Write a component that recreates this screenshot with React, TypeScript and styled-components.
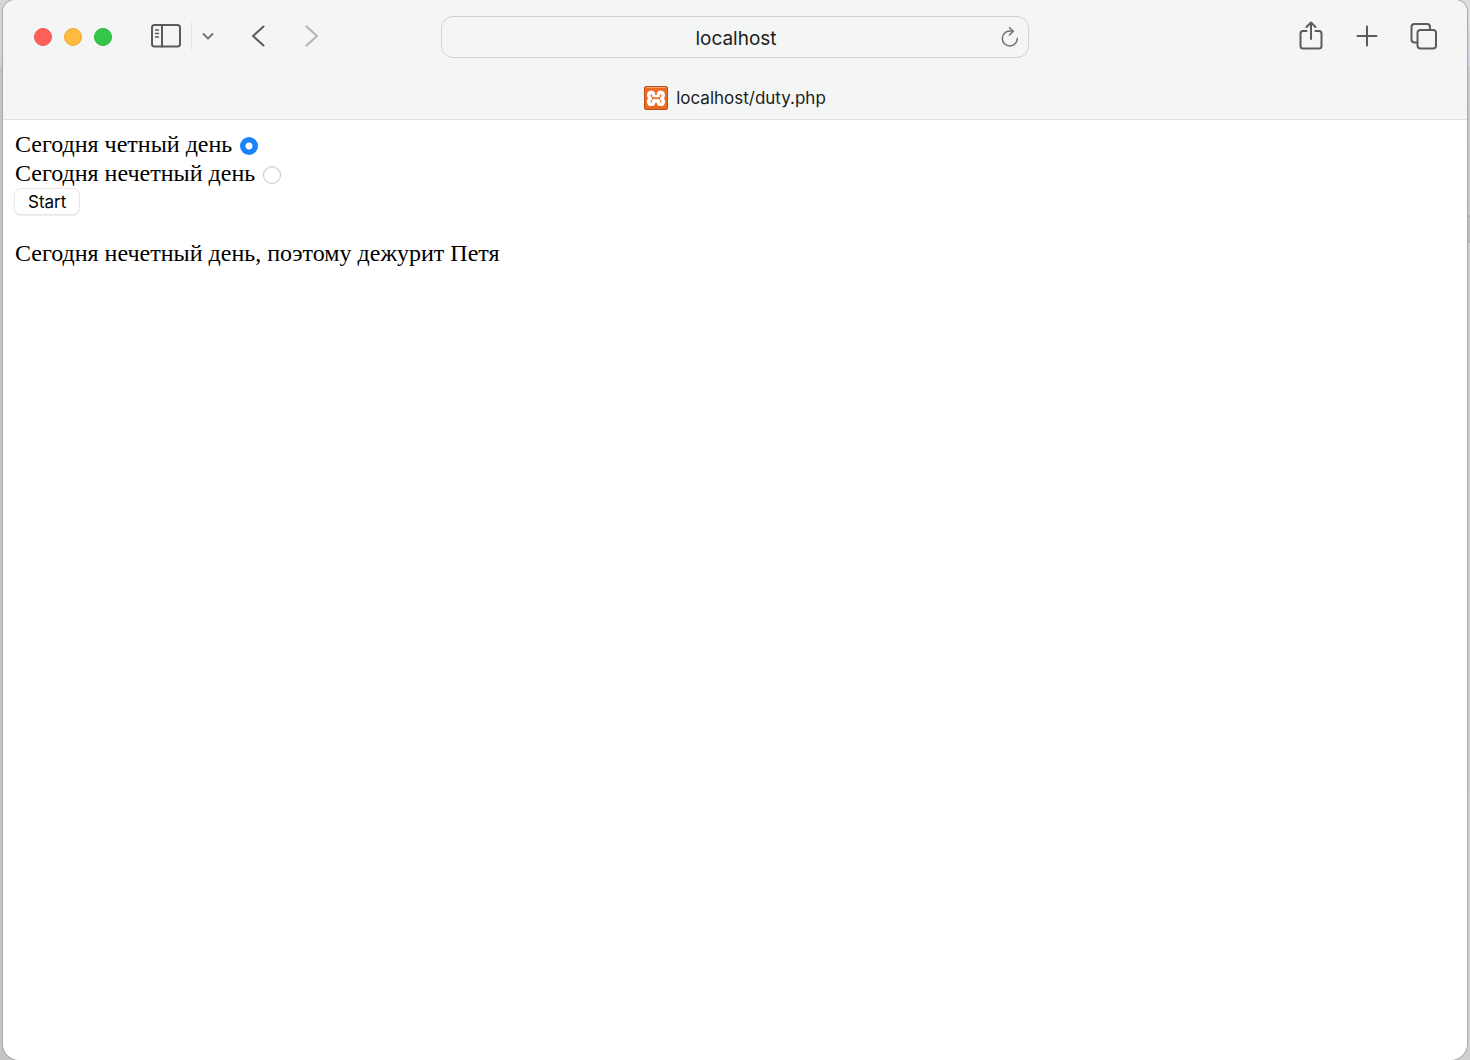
import React, { useState } from "react";
import styled, { createGlobalStyle } from "styled-components";

const GlobalStyle = createGlobalStyle`
  *, *::before, *::after { box-sizing: border-box; }
  body { margin: 0; }
`;

const sans = `Inter, "Liberation Sans", sans-serif`;
const serif = `"Liberation Serif", "Times New Roman", serif`;

const Desktop = styled.div`
  display: flex;
  min-height: 100vh;
  padding: 0 3px;
  background:
    linear-gradient(#d6d6d6 0, #cfd0da 66px, #c4c4c4 67px, #c4c4c4 100%) left / 50% 100% no-repeat,
    linear-gradient(#dedede 0, #d3d4de 66px, #cbcbcb 67px, #c6c6c6 215px, #a4a4a4 216px, #bdbdbd 218px, #bdbdbd 241px, #a8a8a8 242px, #cdcdcd 243px, #d0d0d0 100%);
`;

const Window = styled.div`
  flex: 1;
  display: flex;
  flex-direction: column;
  overflow: hidden;
  border-radius: 12px 12px 16px 16px;
  background: #fff;
  box-shadow: 0 0 0 1px #a9aaab;
`;

const Chrome = styled.header`
  background: #f4f6f5;
  border-bottom: 1px solid #dfe0e0;
  font-family: ${sans};
  color: #1b1c1c;
`;

const Toolbar = styled.div`
  display: grid;
  grid-template-columns: 1fr minmax(0, 588px) 1fr;
  align-items: center;
  height: 73px;
  padding: 0 28px;
`;

const ToolGroup = styled.div<{ $end?: boolean; $gap?: number }>`
  display: flex;
  align-items: center;
  justify-content: ${(p) => (p.$end ? "flex-end" : "flex-start")};
  gap: ${(p) => p.$gap ?? 0}px;
  padding-bottom: 2px;
`;

const Lights = styled.div`
  display: flex;
  gap: 12px;
  padding: 2px 38px 0 3px;
`;

const Light = styled.button<{ $fill: string; $edge: string }>`
  width: 18px;
  height: 18px;
  padding: 0;
  border: 1px solid ${(p) => p.$edge};
  border-radius: 50%;
  background: ${(p) => p.$fill};
`;

const IconButton = styled.button<{ $tone?: string }>`
  display: flex;
  align-items: center;
  justify-content: center;
  width: 32px;
  height: 32px;
  padding: 0;
  border: 0;
  background: none;
  color: ${(p) => p.$tone ?? "#5a5c5b"};

  svg {
    display: block;
    flex: none;
    fill: none;
    stroke: currentColor;
    stroke-width: 2;
    stroke-linecap: round;
    stroke-linejoin: round;
  }
`;

const Divider = styled.span`
  width: 1px;
  height: 28px;
  margin-left: 9px;
  background: #e3e5e4;
`;

const History = styled.div`
  display: flex;
  gap: 22px;
  margin-left: 18px;
`;

const AddressBar = styled.form`
  display: grid;
  grid-template-columns: 34px 1fr 34px;
  align-items: center;
  height: 42px;
  border: 1px solid #d1d3d2;
  border-radius: 12px;
`;

const AddressInput = styled.input`
  grid-column: 2;
  width: 100%;
  height: 32px;
  padding: 4px 0 0 2px;
  border: 0;
  outline: 0;
  background: none;
  color: inherit;
  font: 19px/28px ${sans};
  text-align: center;
`;

const Tab = styled.div`
  display: flex;
  align-items: center;
  justify-content: center;
  gap: 8px;
  height: 46px;
  padding-top: 4px;
  font-size: 17px;
  line-height: 24px;

  svg { display: block; }
`;

const Page = styled.main`
  padding: 10px 12px;
  color: #000;
  font: 24px/29px ${serif};
`;

const Choice = styled.div`
  display: flex;
  align-items: center;
  gap: 8px;
`;

const Radio = styled.input`
  appearance: none;
  width: 18px;
  height: 18px;
  margin: 2px 0 0;
  border: 1px solid #c9c9c9;
  border-radius: 50%;
  background: #fff;
  box-shadow: inset 0 1px 1px #ececec;

  &:checked {
    border: 0;
    background: radial-gradient(circle, #fff 3px, #1a82fb 4px);
    box-shadow: none;
  }
`;

const StartButton = styled.button`
  display: block;
  height: 25px;
  margin-top: 1px;
  padding: 0 13px;
  border: 0;
  border-radius: 6px;
  background: #fff;
  box-shadow: 0 0 0 1px #e9e9e9, 0 1px 2px #bbb;
  color: #000;
  font: 17px/24px ${sans};
`;

const Result = styled.p`
  margin: 25px 0 0;
`;

function SidebarIcon() {
  return (
    <svg width="30" height="24" viewBox="0 0 30 24">
      <rect x="1" y="1" width="28" height="21.5" rx="2.5" />
      <path d="M11 1v21.5" />
      <path d="M4.5 6h3M4.5 9.5h3M4.5 13h3" strokeWidth="1.4" />
    </svg>
  );
}

function Favicon() {
  return (
    <svg width="24" height="24" viewBox="0 0 24 24" fill="none">
      <rect x="0.5" y="0.5" width="23" height="23" rx="1.5" fill="#ee6b22" stroke="#b8501b" />
      <path d="M2 1.5h20" stroke="#f6a575" />
      <g stroke="#fff" strokeWidth="3.6" strokeLinecap="round" strokeLinejoin="round">
        <path d="M9.3 7.3C8.3 6 5 5.8 4.8 8.8 4.7 10.500 5.300 11.500 6.300 12.500 5 13.300 4.600 14.500 4.800 16.200 5.200 19 9.300 18.900 9.600 16.500V14.800H14.400V16.500C14.700 18.900 18.800 19 19.200 16.200 19.400 14.500 19 13.300 17.700 12.500 18.700 11.500 19.300 10.500 19.200 8.800 19 5.800 15.700 6 14.700 7.300" />
        <path d="M9.500 7.500V10H14.500V7.500" strokeWidth="2.6" />
      </g>
    </svg>
  );
}

export default function App() {
  const [day, setDay] = useState("even");
  const [address, setAddress] = useState("localhost");

  return (
    <Desktop>
      <GlobalStyle />
      <Window>
        <Chrome>
          <Toolbar>
            <ToolGroup>
              <Lights>
                <Light aria-label="Close" $fill="#fe5f58" $edge="#ee5751" />
                <Light aria-label="Minimize" $fill="#febb40" $edge="#eba830" />
                <Light aria-label="Zoom" $fill="#34c648" $edge="#2bb03c" />
              </Lights>
              <IconButton aria-label="Sidebar"><SidebarIcon /></IconButton>
              <Divider />
              <IconButton aria-label="Tab groups" $tone="#747675">
                <svg width="12" height="8" viewBox="0 0 12 8"><path d="M1.500 2 6 6.500 10.500 2" /></svg>
              </IconButton>
              <History>
                <IconButton aria-label="Back">
                  <svg width="14" height="22" viewBox="0 0 14 22"><path d="M12.500 1.500 2 11l10.500 9.500" /></svg>
                </IconButton>
                <IconButton aria-label="Forward" $tone="#b3b5b4">
                  <svg width="14" height="22" viewBox="0 0 14 22"><path d="M1.500 1.500 12 11 1.500 20.500" /></svg>
                </IconButton>
              </History>
            </ToolGroup>
            <AddressBar onSubmit={(e) => e.preventDefault()}>
              <AddressInput aria-label="Address" value={address} onChange={(e) => setAddress(e.target.value)} />
              <IconButton type="button" aria-label="Reload" $tone="#707271">
                <svg width="18" height="20" viewBox="0 0 18 20">
                  <g strokeWidth="1.500">
                    <path d="M16.300 11.500A7.500 7.500 0 1 1 8.800 4h3" />
                    <path d="M8.500 .8 12.300 4.300 8.500 8" />
                  </g>
                </svg>
              </IconButton>
            </AddressBar>
            <ToolGroup $end $gap={24}>
              <IconButton aria-label="Share">
                <svg width="24" height="30" viewBox="0 0 24 30">
                  <path d="M7.500 10H4a2.500 2.500 0 0 0-2.500 2.500V25A2.500 2.500 0 0 0 4 27.500h16a2.500 2.500 0 0 0 2.500-2.500V12.500A2.500 2.500 0 0 0 20 10h-3.500" />
                  <path d="M12 18V2M7.500 6 12 1.500 16.500 6" />
                </svg>
              </IconButton>
              <IconButton aria-label="New tab">
                <svg width="22" height="22" viewBox="0 0 22 22"><path d="M11 1.500v19M1.500 11h19" /></svg>
              </IconButton>
              <IconButton aria-label="Tab overview">
                <svg width="28" height="28" viewBox="0 0 28 28">
                  <rect x="8.500" y="8" width="18.500" height="18.500" rx="3" />
                  <path d="M8 20.500H5.500A3 3 0 0 1 2.500 17.500V5a3 3 0 0 1 3-3H18a3 3 0 0 1 3 3v2.500" />
                </svg>
              </IconButton>
            </ToolGroup>
          </Toolbar>
          <Tab>
            <Favicon />
            <span>localhost/duty.php</span>
          </Tab>
        </Chrome>
        <Page>
          <form onSubmit={(e) => e.preventDefault()}>
            <Choice>
              <label htmlFor="even">Сегодня четный день</label>
              <Radio type="radio" id="even" name="day" checked={day === "even"} onChange={() => setDay("even")} />
            </Choice>
            <Choice>
              <label htmlFor="odd">Сегодня нечетный день</label>
              <Radio type="radio" id="odd" name="day" checked={day === "odd"} onChange={() => setDay("odd")} />
            </Choice>
            <StartButton type="submit">Start</StartButton>
          </form>
          <Result>Сегодня нечетный день, поэтому дежурит Петя</Result>
        </Page>
      </Window>
    </Desktop>
  );
}
